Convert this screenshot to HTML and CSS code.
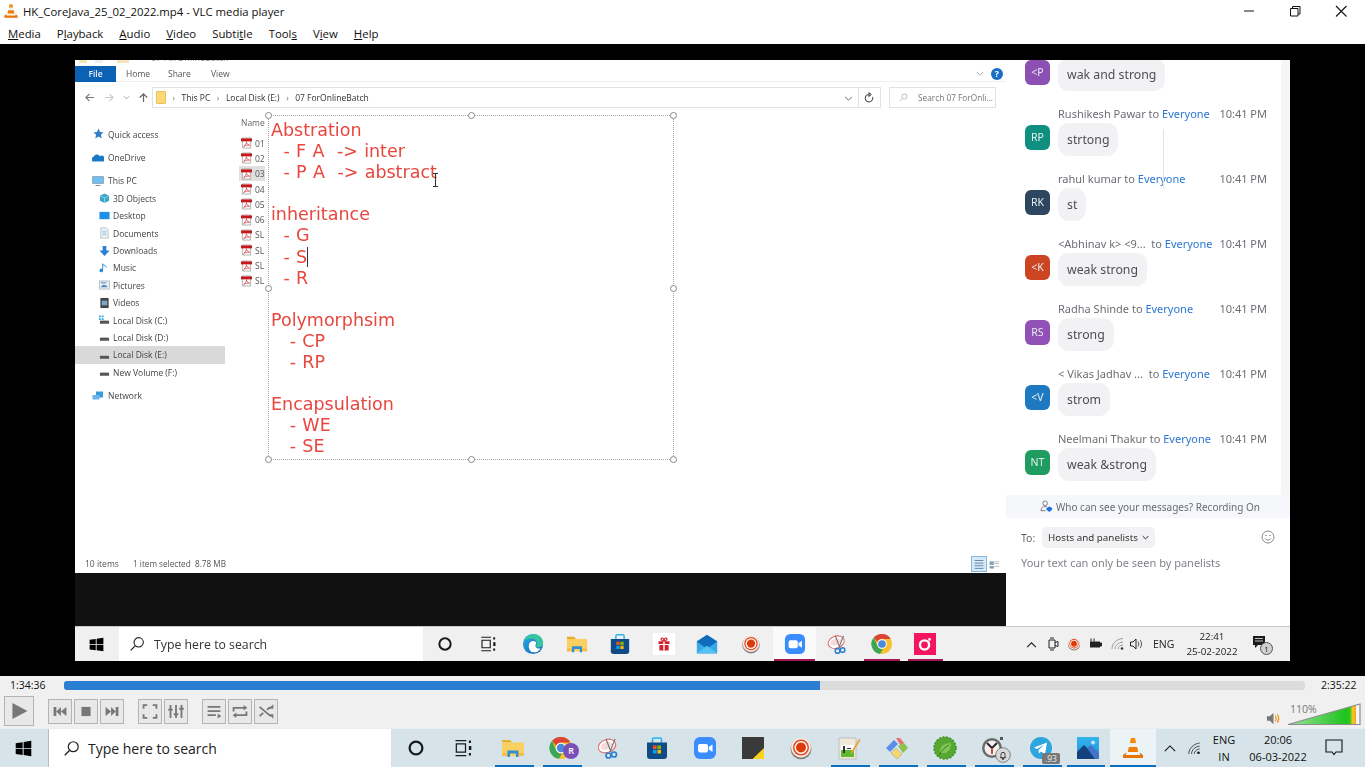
FILE: index.html
```html
<!DOCTYPE html>
<html lang="en">
<head>
<meta charset="utf-8">
<title>VLC media player</title>
<link rel="stylesheet" href="styles.css">
</head>
<body>
<svg class="defs" aria-hidden="true">
  <defs>
    <linearGradient id="volfill" x1="0" x2="1" y1="0" y2="0">
      <stop offset="0" stop-color="#9be39b"/><stop offset=".8" stop-color="#1fc41f"/><stop offset=".86" stop-color="#2cc81c"/><stop offset=".9" stop-color="#ffc81e"/><stop offset=".94" stop-color="#f5a623"/><stop offset=".941" stop-color="#f7f7f7"/><stop offset="1" stop-color="#f7f7f7"/>
    </linearGradient>
    <linearGradient id="edgeblue" x1="0" x2="1" y1="0" y2="1">
      <stop offset="0" stop-color="#2fb0e0"/><stop offset="1" stop-color="#0d5fb8"/>
    </linearGradient>
    <linearGradient id="photosky" x1="0" x2="0" y1="0" y2="1">
      <stop offset="0" stop-color="#35b4ee"/><stop offset="1" stop-color="#1f8fd8"/>
    </linearGradient>
  </defs>
  <symbol id="i-vlc" viewBox="0 0 24 24"><path d="M10 2h4l1.2 5H8.800z" fill="#f48a0c"/><path d="M8.800 7h6.400l1 4H7.800z" fill="#f1f1f1"/><path d="M7.800 11h8.400l1 5H6.800z" fill="#f07d06"/><path d="M6.800 16h10.400l.6 1.800H6.200z" fill="#f4f4f4"/><path d="M5.500 16.500 2 19v3h20v-3l-3.500-2.500.6 2.400H4.900z" fill="#e87405"/></symbol>
  <symbol id="i-win" viewBox="0 0 24 24"><path d="M1 4.500 10.800 3v8.500H1zM12.200 2.800 23 1.200v10.300H12.200zM1 12.800h9.800v8.400L1 19.800zM12.200 12.800H23v10l-10.800-1.500z"/></symbol>
  <symbol id="i-search" viewBox="0 0 24 24"><circle cx="14.500" cy="9.500" r="7" fill="none" stroke="#222" stroke-width="1.700"/><path d="M9.500 14.500 2.500 21.500" stroke="#222" stroke-width="1.900"/></symbol>
  <symbol id="i-cortana" viewBox="0 0 24 24"><circle cx="12" cy="12" r="8.500" fill="none" stroke="#1a1a1a" stroke-width="3"/></symbol>
  <symbol id="i-task" viewBox="0 0 24 24"><path d="M3 3h13M3 21h13M4 7h11v10H4z" fill="none" stroke="#1a1a1a" stroke-width="1.500"/><path d="M19 3h2.500v3H19zM19 9.500h3v5h-3zM19 18h2.500v3H19z" fill="#1a1a1a"/></symbol>
  <symbol id="i-edge" viewBox="0 0 24 24"><circle cx="12" cy="12" r="11" fill="url(#edgeblue)"/><path d="M1.800 9.500C4 2.500 11 0 16 1.500c5 1.600 7.500 6 7 10.500-.4 3.300-5 4.800-8.500 3 2.500-2.500 2-6-.5-7.800C10 5 4.500 6 1.800 9.500z" fill="#38c6a0"/><path d="M7.500 13c.5-3 3-4.700 5.500-4.300 2 .4 3 2 2 4-.7 1.500-.5 3 1.500 3.800 1.500.6 3 .4 4-.2-2 4-5.500 5.200-8.500 4.700-3.500-.6-5-4.500-4.500-8z" fill="#fff"/></symbol>
  <symbol id="i-folder" viewBox="0 0 24 24"><path d="M1 4h8l2 2.500H1z" fill="#e8ad2a"/><path d="M1 6.500h22V20H1z" fill="#fbd063"/><path d="M1 17h5.500v3H1zM17.500 17H23v3h-5.500z" fill="#f2bd4a"/><path d="M6.500 14.500h11V21H15v-3.500H9V21H6.500z" fill="#2f8fd4"/></symbol>
  <symbol id="i-store" viewBox="0 0 24 24"><path d="M7.500 7V3.500a1.500 1.500 0 0 1 1.500-1.500h6a1.500 1.500 0 0 1 1.500 1.500V7" fill="none" stroke="#2bb3e6" stroke-width="1.600"/><path d="M2 6.500h20V20a3 3 0 0 1-3 3H5a3 3 0 0 1-3-3z" fill="#0f4b85"/><path d="M8 9.500h3.600v3.600H8z" fill="#f25022"/><path d="M12.400 9.500H16v3.600h-3.600z" fill="#7fba00"/><path d="M8 13.900h3.600v3.600H8z" fill="#00a4ef"/><path d="M12.400 13.900H16v3.600h-3.600z" fill="#ffb900"/></symbol>
  <symbol id="i-gift" viewBox="0 0 24 24"><path d="M0 0h24v24H0z" fill="#fff"/><path d="M6 9h12v3H6zM7 13h10v6H7z" fill="#d21f2b"/><path d="M11.200 9h1.600v10h-1.600z" fill="#fff"/><path d="M12 9C9 9 8 6 9.500 5.500S12 7 12 9c0-2 1-4 2.500-3.500S15 9 12 9z" fill="none" stroke="#d21f2b" stroke-width="1.200"/></symbol>
  <symbol id="i-mail" viewBox="0 0 24 24"><path d="M1 9 12 2l11 7v13H1z" fill="#0f6cbd"/><path d="M1 9.500 12 17l11-7.500V22H1z" fill="#36a9e6"/><path d="M1 22 12 14l11 8z" fill="#55c2f3"/></symbol>
  <symbol id="i-rec" viewBox="0 0 24 24"><circle cx="12" cy="12.800" r="10.500" fill="#8a7d78"/><circle cx="12" cy="11.500" r="10" fill="#f3e9e4"/><circle cx="12" cy="11.500" r="8" fill="#e8491a"/><circle cx="12" cy="11.500" r="6.500" fill="#fff"/><circle cx="12" cy="11.500" r="5" fill="#dc3b0c"/></symbol>
  <symbol id="i-zoom" viewBox="0 0 24 24"><rect x="1" y="1" width="22" height="22" rx="6" fill="#3a8dff"/><rect x="5" y="8" width="10" height="8.500" rx="2" fill="#fff"/><path d="m15.800 11 3.700-2.600v7.700L15.800 13.500z" fill="#fff"/></symbol>
  <symbol id="i-snip" viewBox="0 0 24 24"><ellipse cx="10" cy="10" rx="9" ry="6.500" transform="rotate(-20 10 10)" fill="#fff" stroke="#e46a6a" stroke-width="1.100"/><ellipse cx="9.500" cy="9.800" rx="6" ry="3.600" transform="rotate(-20 9.500 9.800)" fill="#f6dada"/><path d="m9 3 5 13M18 3l-5 13" stroke="#777" stroke-width="1.200"/><circle cx="11.500" cy="19.500" r="2.500" fill="none" stroke="#2c7fd0" stroke-width="1.700"/><circle cx="17" cy="18.500" r="2.500" fill="none" stroke="#2c7fd0" stroke-width="1.700"/></symbol>
  <symbol id="i-chrome" viewBox="0 0 24 24"><circle cx="12" cy="12" r="11" fill="#fbc02d"/><path d="M12 1a11 11 0 0 1 9.500 5.500H12A5.500 5.500 0 0 0 7 9.800L3 4.800A11 11 0 0 1 12 1z" fill="#db4437"/><path d="M3 4.800 7.300 14.500a5.500 5.500 0 0 0 5.900 3L9.800 22.800A11 11 0 0 1 3 4.800z" fill="#3ca655"/><circle cx="12" cy="12" r="5.300" fill="#fff"/><circle cx="12" cy="12" r="4.200" fill="#4a89dc"/></symbol>
  <symbol id="i-redapp" viewBox="0 0 24 24"><path d="M0 0h24v24H0z" fill="#f5145f"/><circle cx="11.500" cy="13" r="5" fill="none" stroke="#fff" stroke-width="2.600"/><circle cx="17" cy="7" r="1.500" fill="#fff"/></symbol>
  <symbol id="i-sticky" viewBox="0 0 24 24"><path d="M1 1h22v22H1z" fill="#3a3a3a"/><path d="M23 12v11H11.500z" fill="#fbd21e"/></symbol>
  <symbol id="i-note" viewBox="0 0 24 24"><path d="M2 2h17v21H2z" fill="#eee9d8" stroke="#aaa" stroke-width=".6"/><path d="M4 9h13v12H4z" fill="#fff"/><path d="M4 14h13v7H4z" fill="#5fb82e"/><path d="M6 10v7h2v-7zM10 12h4v1h-4z" fill="#333"/><path d="m14 16 8-13 1.500 1-8 13-2 1z" fill="#e8a13a"/></symbol>
  <symbol id="i-gem" viewBox="0 0 24 24"><path d="M1 12 9 4l4 4-8 8z" fill="#5a8fe8"/><path d="M11 2h4l4 5-3 3z" fill="#e87070"/><path d="M13 10l6-3 4 5-5 5z" fill="#8cc152"/><path d="M6 17l5-5 6 6-5 5z" fill="#f5d76e" stroke="#999" stroke-width=".5"/></symbol>
  <symbol id="i-spring" viewBox="0 0 24 24"><circle cx="12" cy="12" r="11" fill="#56a832" stroke="#3f8f22" stroke-width="1.500" stroke-dasharray="2 1.500"/><path d="M7 17c-1-6 4-10 11-10 0 7-4 11-9 10z" fill="#7fc653"/><path d="M6 19C9 14 12 11 16 9" stroke="#2e7a18" fill="none"/></symbol>
  <symbol id="i-clock" viewBox="0 0 24 24"><circle cx="11" cy="12" r="10" fill="#6b6b6b"/><circle cx="11" cy="12" r="7.500" fill="#f1f1f1"/><path d="M11 12 6 7M11 12l5-5" stroke="#222" stroke-width="1.800"/><path d="M11 12v6" stroke="#d23c1c" stroke-width="1.800"/><path d="M19 1h3v3h-3z" fill="#555"/></symbol>
  <symbol id="i-bell" viewBox="0 0 24 24"><circle cx="12" cy="12" r="11" fill="#d9d9d9" stroke="#555"/><path d="M8 16c1-1 1-2 1-5a3 3 0 0 1 6 0c0 3 0 4 1 5zM11 17h2v1.500h-2z" fill="none" stroke="#222" stroke-width="1.300"/></symbol>
  <symbol id="i-telegram" viewBox="0 0 24 24"><circle cx="12" cy="12" r="11" fill="#2ea5dc"/><path d="m5 11.500 13-5-2 12-4-3-2 2-.5-3.500 6-5.500-7.500 4.500z" fill="#fff"/></symbol>
  <symbol id="i-photos" viewBox="0 0 24 24"><path d="M1 1h22v22H1z" fill="url(#photosky)"/><circle cx="17" cy="6.500" r="2" fill="#bfe6fb"/><path d="M1 23V16l7-7 9 9 2 5z" fill="#14407e"/><path d="M11 12l4-3 8 8v6h-4z" fill="#4273c9"/></symbol>
  <symbol id="i-pdf" viewBox="0 0 12 12"><path d="M1.500 .5h9v11h-9z" fill="#fff" stroke="#777" stroke-width=".6"/><path d="M0 1h12v3.200H0z" fill="#c4191c"/><path d="M2.800 10c2-1.500 3.500-4.500 3.200-5.500C5.700 5.800 7 8 9.500 8.400 7.500 8 5 8.500 2.800 10z" fill="none" stroke="#d2232a" stroke-width=".7"/></symbol>
  <symbol id="i-drive" viewBox="0 0 12 12"><path d="M1 7h10v3H1z" fill="#555"/><path d="M2 6h8l1 1H1z" fill="#bbb"/></symbol>
</svg>

<header class="titlebar">
  <svg class="title-icon"><use href="#i-vlc"/></svg>
  <span class="title-text">HK_CoreJava_25_02_2022.mp4 - VLC media player</span>
  <div class="win-btns">
    <svg class="win-btn" viewBox="0 0 46 22"><path d="M18 11h10" stroke="#111"/></svg>
    <svg class="win-btn" viewBox="0 0 46 22"><path d="M18.500 8.500h7.500v7.500h-7.500zM20.500 8.500v-2h7.500v7.500h-2" fill="none" stroke="#111"/></svg>
    <svg class="win-btn" viewBox="0 0 46 22"><path d="m18 6 10.500 10.500M28.500 6 18 16.500" stroke="#111" stroke-width="1.100"/></svg>
  </div>
</header>
<nav class="menubar">
  <span class="menu"><u>M</u>edia</span>
  <span class="menu">P<u>l</u>ayback</span>
  <span class="menu"><u>A</u>udio</span>
  <span class="menu"><u>V</u>ideo</span>
  <span class="menu">Subti<u>t</u>le</span>
  <span class="menu">Tool<u>s</u></span>
  <span class="menu">V<u>i</u>ew</span>
  <span class="menu"><u>H</u>elp</span>
</nav>

<main class="video">
  <div class="screen">
    <div class="screen-main">
      <section class="left">
        <div class="explorer">
          <div class="stub"><span class="stub-icons"></span><span class="stub-text">07 ForOnlineBatch</span></div>
          <div class="tabs">
            <span class="tab-file">File</span>
            <span class="tab tab-home">Home</span>
            <span class="tab tab-share">Share</span>
            <span class="tab tab-view">View</span>
            <span class="tabs-right">
              <svg class="tab-chev" viewBox="0 0 10 6"><path d="m1 1 4 4 4-4" fill="none" stroke="#999"/></svg>
              <span class="help">?</span>
            </span>
          </div>
          <div class="addr-row">
            <span class="nav-icons">
              <svg class="nav-arrow" viewBox="0 0 12 12"><path d="M11 6H2m4-4L2 6l4 4" fill="none" stroke="#777" stroke-width="1.200"/></svg>
              <svg class="nav-arrow" viewBox="0 0 12 12"><path d="M1 6h9M6 2l4 4-4 4" fill="none" stroke="#ccc" stroke-width="1.200"/></svg>
              <svg class="nav-small" viewBox="0 0 8 8"><path d="m1 2.500 3 3 3-3" fill="none" stroke="#999"/></svg>
              <svg class="nav-arrow" viewBox="0 0 12 12"><path d="M6 11V2M2 6l4-4 4 4" fill="none" stroke="#666" stroke-width="1.300"/></svg>
            </span>
            <div class="addr">
              <span class="addr-folder"></span>
              <span class="crumb-sep">›</span><span class="crumb">This PC</span>
              <span class="crumb-sep">›</span><span class="crumb">Local Disk (E:)</span>
              <span class="crumb-sep">›</span><span class="crumb">07 ForOnlineBatch</span>
              <svg class="addr-chev" viewBox="0 0 10 6"><path d="m1 1 4 4 4-4" fill="none" stroke="#666" stroke-width="1.200"/></svg>
              <svg class="addr-refresh" viewBox="0 0 12 12"><path d="M6 2.500a3.700 3.700 0 1 0 3.500 2.500M6 .8v3.400l2-1.700z" fill="none" stroke="#555" stroke-width="1.100"/></svg>
            </div>
            <div class="search-box">
              <svg class="search-glass" viewBox="0 0 24 24"><circle cx="14.500" cy="9.500" r="7" fill="none" stroke="#aaa" stroke-width="2"/><path d="M9.500 14.500 2.500 21.500" stroke="#aaa" stroke-width="2"/></svg>
              <span>Search 07 ForOnli...</span>
            </div>
          </div>
          <div class="ex-body">
            <ul class="tree">
              <li class="node gap"><svg class="n-ic" viewBox="0 0 12 12"><path d="m6.500 .5 1.500 3.500 3.500.4-2.600 2.400.8 3.700-3.200-1.900-3.200 1.900.8-3.700L1.500 4.400 5 4z" fill="#2f7fc9"/></svg>Quick access</li>
              <li class="node gap"><svg class="n-ic" viewBox="0 0 12 12"><path d="M1 9.500a2.300 2.300 0 0 1 .5-4.500 3.500 3.500 0 0 1 6.500-.7 3 3 0 0 1 3.500 5.200z" fill="#1a78c8"/></svg>OneDrive</li>
              <li class="node gap"><svg class="n-ic" viewBox="0 0 12 12"><path d="M.5 1.500h11v7H.5z" fill="#6fc0ee" stroke="#778" stroke-width=".5"/><path d="M3.500 10h5v1h-5z" fill="#889"/></svg>This PC</li>
              <li class="node sub"><svg class="n-ic" viewBox="0 0 12 12"><path d="m6 1 5 2.500v5.500L6 11.500 1 9V3.500z" fill="#3aa7c9"/><path d="m6 6 5-2.500M6 6 1 3.500M6 6v5.500" stroke="#d6f1fa" stroke-width=".6"/></svg>3D Objects</li>
              <li class="node sub"><svg class="n-ic" viewBox="0 0 12 12"><path d="M.5 1.500h11v8H.5z" fill="#1e90e8"/></svg>Desktop</li>
              <li class="node sub"><svg class="n-ic" viewBox="0 0 12 12"><path d="M2 .5h6l2 2v9H2z" fill="#f6f8fa" stroke="#8aa" stroke-width=".7"/><path d="M3.500 4h5M3.500 6h5M3.500 8h5" stroke="#6aa5cf" stroke-width=".7"/></svg>Documents</li>
              <li class="node sub"><svg class="n-ic" viewBox="0 0 12 12"><path d="M4 .5h4v5h3.500L6 11.500.5 5.500H4z" fill="#2a7fd4"/></svg>Downloads</li>
              <li class="node sub"><svg class="n-ic" viewBox="0 0 12 12"><path d="M4.500 1v7.500a2 2 0 1 1-1-1.500V.5c2 2.500 5 2.500 5 6-1-2-2.500-3-4-3.500z" fill="#2b8fe0"/></svg>Music</li>
              <li class="node sub"><svg class="n-ic" viewBox="0 0 12 12"><path d="M.5 1.500h11v9H.5z" fill="#e8eef4" stroke="#8a98a8" stroke-width=".6"/><path d="M2 8l3-2.500 4 1.500v1.500H2zM2 3h6v1H2z" fill="#5b89ba"/></svg>Pictures</li>
              <li class="node sub"><svg class="n-ic" viewBox="0 0 12 12"><path d="M1.500 .5h9v11h-9z" fill="#444"/><path d="M3 3.500h6v5H3z" fill="#7fa6c9"/></svg>Videos</li>
              <li class="node sub"><svg class="n-ic" viewBox="0 0 12 12"><use href="#i-drive"/><path d="M0 1h2v2H0zM3 1h2v2H3zM0 4h2v2H0zM3 4h2v2H3z" fill="#2ea3e0"/></svg>Local Disk (C:)</li>
              <li class="node sub"><svg class="n-ic" viewBox="0 0 12 12"><use href="#i-drive"/></svg>Local Disk (D:)</li>
              <li class="node sub sel"><svg class="n-ic" viewBox="0 0 12 12"><use href="#i-drive"/></svg>Local Disk (E:)</li>
              <li class="node sub"><svg class="n-ic" viewBox="0 0 12 12"><use href="#i-drive"/></svg>New Volume (F:)</li>
              <li class="node gap"><svg class="n-ic" viewBox="0 0 12 12"><path d="M4 1.500h7v6H4z" fill="#3d9ad8"/><path d="M.5 5h7v4.500h-7z" fill="#69b7e8"/></svg>Network</li>
            </ul>
            <div class="files">
              <div class="files-head">Name</div>
              <div class="file"><svg class="pdf"><use href="#i-pdf"/></svg>01</div>
              <div class="file"><svg class="pdf"><use href="#i-pdf"/></svg>02</div>
              <div class="file file-sel"><svg class="pdf"><use href="#i-pdf"/></svg>03</div>
              <div class="file"><svg class="pdf"><use href="#i-pdf"/></svg>04</div>
              <div class="file"><svg class="pdf"><use href="#i-pdf"/></svg>05</div>
              <div class="file"><svg class="pdf"><use href="#i-pdf"/></svg>06</div>
              <div class="file"><svg class="pdf"><use href="#i-pdf"/></svg>SL</div>
              <div class="file"><svg class="pdf"><use href="#i-pdf"/></svg>SL</div>
              <div class="file"><svg class="pdf"><use href="#i-pdf"/></svg>SL</div>
              <div class="file"><svg class="pdf"><use href="#i-pdf"/></svg>SL</div>
            </div>
          </div>
          <div class="ex-status">
            <span class="st-count">10 items</span>
            <span class="st-sel">1 item selected&nbsp; 8.78 MB</span>
            <span class="st-views">
              <svg class="vw vw-on" viewBox="0 0 16 16"><path d="M3 4h10M3 7h10M3 10h10M3 13h10" stroke="#5a7d9a"/></svg>
              <svg class="vw" viewBox="0 0 12 12"><path d="M1 3h4v3H1zM6 3h5M6 5h5M1 8h4v2H1zM6 8h5" fill="#7fa6c9" stroke="#7a8b99" stroke-width=".6"/></svg>
            </span>
          </div>

          <div class="paint-box">
            <pre class="paint-text">Abstration
  - F A  -&gt; inter
  - P A  -&gt; abstract

inheritance
  - G
  - S<span class="caret"></span>
  - R

Polymorphsim
   - CP
   - RP

Encapsulation
   - WE
   - SE</pre>
            <i class="hd hd-tl"></i><i class="hd hd-tc"></i><i class="hd hd-tr"></i>
            <i class="hd hd-ml"></i><i class="hd hd-mr"></i>
            <i class="hd hd-bl"></i><i class="hd hd-bc"></i><i class="hd hd-br"></i>
          </div>
          <svg class="ibeam" viewBox="0 0 7 14"><path d="M1 .5h5M1 13.500h5M3.500 .5v13" fill="none" stroke="#333" stroke-width="1.100"/></svg>
        </div>
        <div class="video-gap"></div>
      </section>

      <aside class="chat">
        <div class="chat-scroll">
          <div class="msgs">
            <article class="msg msg-first">
              <div class="meta"><span>&nbsp;</span></div>
              <div class="row"><span class="av av-purple">&lt;P</span><span class="bubble">wak and strong</span></div>
            </article>
            <article class="msg">
              <div class="meta"><span>Rushikesh Pawar to <b>Everyone</b></span><time>10:41 PM</time></div>
              <div class="row"><span class="av av-teal">RP</span><span class="bubble">strtong</span></div>
            </article>
            <article class="msg">
              <div class="meta"><span>rahul kumar to <b>Everyone</b></span><time>10:41 PM</time></div>
              <div class="row"><span class="av av-navy">RK</span><span class="bubble">st</span></div>
            </article>
            <article class="msg">
              <div class="meta"><span>&lt;Abhinav k&gt; &lt;9...&nbsp; to <b>Everyone</b></span><time>10:41 PM</time></div>
              <div class="row"><span class="av av-red">&lt;K</span><span class="bubble">weak strong</span></div>
            </article>
            <article class="msg">
              <div class="meta"><span>Radha Shinde to <b>Everyone</b></span><time>10:41 PM</time></div>
              <div class="row"><span class="av av-violet">RS</span><span class="bubble">strong</span></div>
            </article>
            <article class="msg">
              <div class="meta"><span>&lt; Vikas Jadhav ...&nbsp; to <b>Everyone</b></span><time>10:41 PM</time></div>
              <div class="row"><span class="av av-blue">&lt;V</span><span class="bubble">strom</span></div>
            </article>
            <article class="msg">
              <div class="meta"><span>Neelmani Thakur to <b>Everyone</b></span><time>10:41 PM</time></div>
              <div class="row"><span class="av av-green">NT</span><span class="bubble">weak &amp;strong</span></div>
            </article>
          </div>
          <i class="cursor-line"></i>
          <i class="thumb"></i>
        </div>
        <div class="notice">
          <svg class="notice-ic" viewBox="0 0 14 14"><circle cx="5.500" cy="3.500" r="2.500" fill="none" stroke="#777"/><path d="M1 11.500c0-3 2-4.500 4.500-4.500 1 0 1.500.2 2 .5M1 11.500h5" fill="none" stroke="#777"/><path d="m10 7 3 1.500v2L10 13l-3-2.500v-2z" fill="#1a6fe0"/></svg>
          <span>Who can see your messages? Recording On</span>
        </div>
        <div class="to-row">
          <span class="to-label">To:</span>
          <span class="chip">Hosts and panelists <svg class="chip-chev" viewBox="0 0 10 6"><path d="m1 1 4 4 4-4" fill="none" stroke="#222" stroke-width="1.400"/></svg></span>
          <svg class="smile" viewBox="0 0 14 14"><circle cx="7" cy="7" r="6" fill="none" stroke="#888"/><circle cx="5" cy="5.500" r=".8" fill="#888"/><circle cx="9" cy="5.500" r=".8" fill="#888"/><path d="M4 8.500c1.500 2 4.500 2 6 0" fill="none" stroke="#888"/></svg>
        </div>
        <div class="placeholder">Your text can only be seen by panelists</div>
      </aside>
    </div>

    <footer class="in-task">
      <svg class="in-start"><use href="#i-win"/></svg>
      <div class="in-search"><svg class="in-glass"><use href="#i-search"/></svg><span>Type here to search</span></div>
      <div class="in-apps">
        <span class="in-app"><svg class="ic-16"><use href="#i-cortana"/></svg></span>
        <span class="in-app"><svg class="ic-18"><use href="#i-task"/></svg></span>
        <span class="in-app in-first"><svg class="ic-22"><use href="#i-edge"/></svg></span>
        <span class="in-app"><svg class="ic-22"><use href="#i-folder"/></svg></span>
        <span class="in-app"><svg class="ic-22"><use href="#i-store"/></svg></span>
        <span class="in-app"><svg class="ic-22"><use href="#i-gift"/></svg></span>
        <span class="in-app"><svg class="ic-22"><use href="#i-mail"/></svg></span>
        <span class="in-app"><svg class="ic-20"><use href="#i-rec"/></svg></span>
        <span class="in-app in-active"><svg class="ic-22"><use href="#i-zoom"/></svg></span>
        <span class="in-app"><svg class="ic-22"><use href="#i-snip"/></svg></span>
        <span class="in-app in-run"><svg class="ic-22"><use href="#i-chrome"/></svg></span>
        <span class="in-app in-run"><svg class="ic-22"><use href="#i-redapp"/></svg></span>
      </div>
      <div class="in-tray">
        <svg class="tr-caret" viewBox="0 0 12 8"><path d="m1 7 5-5 5 5" fill="none" stroke="#222" stroke-width="1.300"/></svg>
        <svg class="tr-ic tr-video" viewBox="0 0 14 14"><path d="M3 3h6v8H3zM9 5.500l3-1v5l-3-1M4 1h4M4 13h4" fill="none" stroke="#222"/></svg>
        <svg class="tr-ic tr-rec"><use href="#i-rec"/></svg>
        <svg class="tr-ic tr-bat" viewBox="0 0 14 14"><path d="M2 4.500h10v6H2z" fill="#222"/><path d="M12 6h1.500v3H12zM3 1.500v3M6 1.500v3" stroke="#222" fill="#222"/></svg>
        <svg class="tr-ic tr-wifi" viewBox="0 0 14 14"><path d="M1 12C1 6 6 2 12 1.500M4 12c0-3.500 3-6.500 8-7M7 12c0-2 1.500-3.500 5-4" fill="none" stroke="#999"/><circle cx="11" cy="11.500" r="1.300" fill="#333"/></svg>
        <svg class="tr-ic tr-vol" viewBox="0 0 14 14"><path d="M1.500 5h2.500l3-3v10l-3-3H1.500z" fill="none" stroke="#222"/><path d="M9 4.500c1 1.500 1 3.500 0 5M11 3c2 2 2 6 0 8" fill="none" stroke="#555"/></svg>
        <span class="tr-lang">ENG</span>
        <span class="tr-clock">22:41<br>25-02-2022</span>
        <span class="tr-notif">
          <svg class="notif-ic" viewBox="0 0 14 14"><path d="M1 1h12v9H6l-3 3v-3H1z" fill="#1a1a1a"/><path d="M3 3.500h8M3 6h8" stroke="#eee" stroke-width=".8"/></svg>
          <i class="notif-badge">1</i>
        </span>
      </div>
    </footer>
  </div>
</main>

<section class="controls">
  <div class="seek-row">
    <span class="time">1:34:36</span>
    <div class="seek"><div class="seek-fill"></div></div>
    <span class="time-end">2:35:22</span>
  </div>
  <div class="btn-row">
    <button class="cb cb-play"><svg viewBox="0 0 30 30"><path d="M8 6.500 24 15 8 23.500z" fill="#777"/></svg></button>
    <div class="btn-group gr-a">
      <button class="cb"><svg viewBox="0 0 24 24"><path d="M5 7h3v10H5zM13 7v10L8 12zM19 7v10l-6-5z" fill="#777"/></svg></button>
      <button class="cb"><svg viewBox="0 0 24 24"><path d="M7 7h10v10H7z" fill="#777"/></svg></button>
      <button class="cb"><svg viewBox="0 0 24 24"><path d="M5 7v10l6-5zM11 7v10l5-5zM16 7h3v10h-3z" fill="#777"/></svg></button>
    </div>
    <div class="btn-group gr-b">
      <button class="cb"><svg viewBox="0 0 24 24"><path d="M5 9V5h4M15 5h4v4M19 15v4h-4M9 19H5v-4" fill="none" stroke="#777" stroke-width="2"/></svg></button>
      <button class="cb"><svg viewBox="0 0 24 24"><path d="M6 5v14M12 5v14M18 5v14" stroke="#777" stroke-width="2"/><path d="M3.500 9h5v2h-5zM9.500 14h5v2h-5zM15.500 8h5v2h-5z" fill="#777"/></svg></button>
    </div>
    <div class="btn-group gr-c">
      <button class="cb"><svg viewBox="0 0 24 24"><path d="M5 7h14M5 11.500h14M5 16h9" stroke="#777" stroke-width="2"/><path d="m16 14.500 4 2.500-4 2.500z" fill="#777"/></svg></button>
      <button class="cb"><svg viewBox="0 0 24 24"><path d="M5 12V8h12M19 12v4H7" fill="none" stroke="#777" stroke-width="2"/><path d="M16 5v6l4-3zM8 13v6l-4-3z" fill="#777"/></svg></button>
      <button class="cb"><svg viewBox="0 0 24 24"><path d="m5 7 12 10M5 17l4-3.500M13 10l4-3" fill="none" stroke="#777" stroke-width="2"/><path d="M20 4v5h-5zM20 20v-5h-5z" fill="#777"/></svg></button>
    </div>
    <div class="volume">
      <svg class="vol-spk" viewBox="0 0 16 16"><path d="M1 5.500h3L8 2v12L4 10.500H1z" fill="#777"/><path d="M10 5c1 2 1 4 0 6M12 3.500c2 3 2 6 0 9" fill="none" stroke="#f08a00" stroke-width="1.200"/></svg>
      <div class="vol-meter">
        <span class="vol-pct">110%</span>
        <svg class="vol-tri" viewBox="0 0 74 23"><path d="M1 21.500 73 1v20.500z" fill="url(#volfill)" stroke="#8d8d8d" stroke-width="1.200"/></svg>
      </div>
    </div>
  </div>
</section>

<footer class="taskbar">
  <svg class="start"><use href="#i-win"/></svg>
  <div class="search"><svg class="glass"><use href="#i-search"/></svg><span>Type here to search</span></div>
  <span class="sys-app"><svg class="ic-18"><use href="#i-cortana"/></svg></span>
  <span class="sys-app"><svg class="ic-20"><use href="#i-task"/></svg></span>
  <div class="apps">
    <span class="app run"><svg class="ic-24"><use href="#i-folder"/></svg></span>
    <span class="app run"><svg class="ic-24"><use href="#i-chrome"/></svg><i class="badge-r">R</i></span>
    <span class="app"><svg class="ic-24"><use href="#i-snip"/></svg></span>
    <span class="app"><svg class="ic-24"><use href="#i-store"/></svg></span>
    <span class="app"><svg class="ic-24"><use href="#i-zoom"/></svg></span>
    <span class="app"><svg class="ic-24"><use href="#i-sticky"/></svg></span>
    <span class="app"><svg class="ic-24"><use href="#i-rec"/></svg></span>
    <span class="app run"><svg class="ic-24"><use href="#i-note"/></svg></span>
    <span class="app run"><svg class="ic-24"><use href="#i-gem"/></svg></span>
    <span class="app run"><svg class="ic-24"><use href="#i-spring"/></svg></span>
    <span class="app run"><svg class="ic-24"><use href="#i-clock"/></svg><svg class="badge-bell"><use href="#i-bell"/></svg></span>
    <span class="app run"><svg class="ic-24"><use href="#i-telegram"/></svg><i class="badge-93">.93</i></span>
    <span class="app run app-photos"><svg class="ic-24"><use href="#i-photos"/></svg></span>
    <span class="app run active"><svg class="ic-24"><use href="#i-vlc"/></svg></span>
  </div>
  <div class="tray">
    <svg class="t-caret" viewBox="0 0 14 8"><path d="m1 7 6-6 6 6" fill="none" stroke="#111" stroke-width="1.300"/></svg>
    <svg class="t-wifi" viewBox="0 0 18 16"><path d="M1 15C1 8 7 2 15 1M4.500 15c0-5 4.500-9.500 10.500-10M8 15c0-3 3-6 7-6.500" fill="none" stroke="#222"/><circle cx="13.500" cy="13.500" r="1.700" fill="#111"/></svg>
    <span class="t-lang">ENG<br>IN</span>
    <span class="t-clock">20:06<br>06-03-2022</span>
    <svg class="t-notif" viewBox="0 0 18 18"><path d="M1 2h16v12h-6l-2 2.500L7 14H1z" fill="none" stroke="#111" stroke-width="1.100"/></svg>
  </div>
</footer>
</body>
</html>
```
FILE: styles.css
```css
* { box-sizing: border-box; }
html, body { margin: 0; padding: 0; }
body {
  width: 1365px;
  height: 767px;
  overflow: hidden;
  display: flex;
  flex-direction: column;
  font-family: "Open Sans", "Noto Sans", sans-serif;
  color: #111;
  background: #fff;
}
.defs { position: absolute; width: 0; height: 0; }
i { font-style: normal; }

/* VLC window chrome */
.titlebar { height: 22px; display: flex; align-items: center; background: #fff; }
.title-icon { width: 16px; height: 18px; flex: none; margin-left: 3px; }
.title-text { margin-left: 4px; font-size: 11.350px; white-space: nowrap; color: #111; }
.win-btns { margin-left: auto; display: flex; margin-right: 1px; }
.win-btn { width: 46px; height: 22px; display: block; }
.menubar { height: 22px; display: flex; background: #fff; font-size: 11.400px; align-items: center; padding-left: 8px; }
.menu { margin-right: 16px; white-space: nowrap; color: #111; }

.video { height: 632px; background: #000; padding: 16px 75px 15px; }
.screen { height: 601px; display: flex; flex-direction: column; }
.screen-main { flex: 1; display: flex; min-height: 0; }
.left { width: 931px; display: flex; flex-direction: column; }
.video-gap { flex: 1; background: #111; }

/* Explorer inside the video */
.explorer {
  position: relative;
  height: 513px;
  background: #fff;
  display: flex;
  flex-direction: column;
  font-size: 8.500px;
  color: #444;
  overflow: hidden;
  filter: blur(.3px);
}
.stub { height: 6px; display: flex; overflow: hidden; flex: none; }
.stub-icons { width: 50px; height: 3px; margin-left: 4px; background: linear-gradient(90deg, #f5e6b8 0 8px, #fff 8px 16px, #eee 16px 24px, #fff 24px 38px, #f5e6b8 38px); }
.stub-text { margin: -9px 0 0 22px; font-size: 9px; color: #888; }
.tabs { height: 16px; flex: none; display: flex; align-items: center; position: relative; border-bottom: 1px solid #efefef; }
.tab-file { width: 41px; height: 16px; background: #0b62b5; color: #eef; display: flex; align-items: center; justify-content: center; font-weight: 600; }
.tab { position: absolute; top: 2px; color: #555; }
.tab-home { left: 51px; }
.tab-share { left: 93px; }
.tab-view { left: 136px; }
.tabs-right { margin-left: auto; display: flex; align-items: center; padding-right: 3px; }
.tab-chev { width: 8px; height: 5px; margin-right: 7px; }
.help { width: 12px; height: 12px; border-radius: 50%; background: #1a6fc4; color: #fff; font-weight: 700; font-size: 9px; line-height: 12px; text-align: center; }
.addr-row { flex: none; height: 21px; margin-top: 5px; display: flex; align-items: center; }
.nav-icons { width: 77px; padding-left: 9px; display: flex; align-items: center; gap: 9px; }
.nav-arrow { width: 11px; height: 11px; flex: none; }
.nav-small { width: 7px; height: 7px; flex: none; margin-left: -1px; margin-right: -1px; }
.addr { width: 729px; height: 21px; border: 1px solid #e2e2e2; display: flex; align-items: center; position: relative; padding-left: 3px; color: #333; }
.addr-folder { width: 10px; height: 13px; background: #fbd978; border: 1px solid #e9c25e; border-radius: 1px; }
.crumb-sep { margin: 0 6.500px; color: #777; }
.addr-chev { position: absolute; left: 691px; top: 8px; width: 9px; height: 5px; }
.addr-refresh { position: absolute; left: 710px; top: 4px; width: 12px; height: 12px; }
.addr::after { content: ""; position: absolute; left: 705px; top: 0; bottom: 0; width: 1px; background: #e2e2e2; }
.search-box { width: 107px; height: 21px; margin-left: 8px; border: 1px solid #e2e2e2; display: flex; align-items: center; padding-left: 9px; gap: 10px; color: #777; white-space: nowrap; font-size: 8.300px; }
.search-glass { width: 9px; height: 9px; flex: none; }

.ex-body { flex: 1; display: flex; min-height: 0; }
.tree { width: 150px; margin: 0; padding: 17.500px 0 0; list-style: none; flex: none; }
.node { height: 17.400px; display: flex; align-items: center; padding-left: 17px; white-space: nowrap; }
.gap { margin-bottom: 6px; }
.gap:nth-child(3) { margin-bottom: 0; }
.sub { padding-left: 24px; }
.sub:nth-child(14) { margin-bottom: 6px; }
.sel { background: #d9d9d9; }
.n-ic { width: 12px; height: 12px; margin-right: 4px; flex: none; }
.sub .n-ic { width: 11px; margin-right: 3px; }
.files { padding: 8px 0 0 14px; }
.files-head { height: 14.500px; line-height: 14px; padding-left: 2px; color: #666; margin-bottom: 5px; }
.file { width: 26px; height: 15.300px; display: flex; align-items: center; padding-left: 2px; gap: 3px; color: #555; overflow: hidden; }
.file-sel { background: #e0e0e0; }
.pdf { width: 11px; height: 12px; flex: none; }
.ex-status { flex: none; height: 18px; display: flex; align-items: center; padding: 0 0 2px 10px; color: #555; position: relative; }
.st-count { width: 48px; }
.st-sel { font-size: 8.200px; }
.st-views { position: absolute; left: 896px; top: 1px; display: flex; gap: 2px; align-items: center; }
.vw { width: 11px; height: 11px; }
.vw-on { width: 16px; height: 16px; background: #d6e9f8; border: 1px solid #8ab8dc; }

/* Paint selection box over the explorer */
.paint-box { position: absolute; left: 193px; top: 55px; width: 406px; height: 345px; border: 1px dotted #a5a5a5; }
.paint-text { margin: 4px 0 0 2px; font-family: "DejaVu Sans", sans-serif; font-size: 17.500px; word-spacing: .7px; line-height: 21.100px; color: #e8463e; white-space: pre; }
.caret { display: inline-block; width: 1px; height: 20px; background: #333; vertical-align: -4px; }
.hd { position: absolute; width: 7px; height: 7px; background: #fff; border: 1px solid #888; border-radius: 50%; }
.hd-tl { left: -4px; top: -4px; }
.hd-tc { left: 199px; top: -4px; }
.hd-tr { right: -4px; top: -4px; }
.hd-ml { left: -4px; top: 169px; }
.hd-mr { right: -4px; top: 169px; }
.hd-bl { left: -4px; bottom: -4px; }
.hd-bc { left: 199px; bottom: -4px; }
.hd-br { right: -4px; bottom: -4px; }
.ibeam { position: absolute; left: 357px; top: 113px; width: 7px; height: 14px; }

/* Zoom chat panel */
.chat { width: 284px; background: #fff; display: flex; flex-direction: column; font-family: "Noto Sans", sans-serif; filter: blur(.25px); }
.chat-scroll { height: 435px; overflow: hidden; position: relative; border-right: 9px solid #f6f6f8; }
.msgs { margin-top: -18px; }
.msg { height: 65px; padding: 0 14px 0 19px; }
.meta { height: 16px; margin-left: 33px; display: flex; justify-content: space-between; font-size: 11px; line-height: 14px; color: #6d6d75; white-space: nowrap; }
.meta b { font-weight: 400; color: #2a77d4; }
.meta time { color: #6d6d75; }
.row { display: flex; align-items: flex-start; gap: 8px; }
.av { width: 25px; height: 25px; margin-top: 2px; padding-bottom: 2px; border-radius: 6px; color: #e8eef2; font-size: 10.500px; display: flex; align-items: center; justify-content: center; flex: none; }
.av-purple { background: #8c4fb2; }
.av-teal { background: #0f8f80; }
.av-navy { background: #2c475f; }
.av-red { background: #cd4422; }
.av-violet { background: #9251b6; }
.av-blue { background: #1d7ac2; }
.av-green { background: #1f9c5f; }
.bubble { height: 33px; padding: 0 9px; background: #f2f2f5; border-radius: 11px; font-size: 12.300px; line-height: 33px; color: #4d4d55; white-space: nowrap; }
.cursor-line { position: absolute; left: 157px; top: 69px; width: 1px; height: 60px; background: #e3e3e6; }
.thumb { position: absolute; left: 275px; top: 426px; width: 7px; height: 7px; border-radius: 50%; background: #aaa; }
.notice { height: 23px; display: flex; align-items: center; justify-content: center; gap: 3px; background: #f6f7fb; font-size: 10px; color: #6a6a72; padding-left: 4px; }
.notice-ic { width: 13px; height: 13px; flex: none; }
.to-row { height: 21px; margin-top: 9px; display: flex; align-items: center; padding-left: 15px; font-size: 10.500px; position: relative; }
.to-label { width: 21px; color: #666; }
.chip { height: 21px; width: 113px; background: #f2f2f5; border-radius: 5px; display: flex; align-items: center; justify-content: center; gap: 4px; color: #333; white-space: nowrap; font-size: 9.800px; }
.chip-chev { width: 7px; height: 5px; }
.smile { position: absolute; right: 15px; top: 3px; width: 14px; height: 14px; }
.placeholder { margin: 7px 0 0 15px; font-size: 11px; line-height: 15px; color: #82828a; white-space: nowrap; }

/* Taskbar captured in the video */
.in-task { height: 35px; flex: none; display: flex; align-items: center; background: #f0f0f0; border-top: 1px solid #c8c8c8; position: relative; filter: blur(.25px); }
.in-start { width: 15px; height: 15px; margin-left: 14px; flex: none; }
.in-search { width: 304px; height: 34px; margin-left: 15px; background: #fff; display: flex; align-items: center; padding-left: 10px; gap: 9px; font-size: 12.300px; color: #333; flex: none; }
.in-glass { width: 16px; height: 16px; flex: none; }
.in-apps { display: flex; height: 34px; }
.in-app { width: 43.600px; height: 34px; display: flex; align-items: center; justify-content: center; position: relative; }
.in-first { margin-left: 1px; }
.in-active { background: #fafafa; }
.in-active::after, .in-run::after { content: ""; position: absolute; left: 1px; right: 1px; bottom: 0; height: 2px; background: #a21850; }
.in-run::after { left: 4px; right: 4px; }
.ic-16 { width: 16px; height: 16px; }
.ic-18 { width: 18px; height: 18px; }
.ic-20 { width: 20px; height: 20px; }
.ic-22 { width: 22px; height: 22px; }
.ic-24 { width: 24px; height: 24px; }
.in-tray { margin-left: auto; display: flex; align-items: center; height: 34px; position: relative; width: 275px; font-size: 10.500px; color: #222; flex: none; }
.tr-caret { width: 11px; height: 7px; margin-left: 11px; flex: none; }
.tr-ic { width: 14px; height: 14px; flex: none; }
.tr-video { margin-left: 9px; }
.tr-rec { margin-left: 7px; }
.tr-bat { margin-left: 7px; }
.tr-wifi { margin-left: 9px; }
.tr-vol { margin-left: 4px; }
.tr-lang { margin-left: 10px; }
.tr-clock { margin-left: 12px; text-align: center; line-height: 15px; font-size: 9.800px; }
.tr-notif { position: absolute; left: 237px; top: 8px; width: 20px; height: 20px; }
.notif-ic { width: 14px; height: 14px; display: block; }
.notif-badge { position: absolute; left: 8px; top: 7px; width: 13px; height: 13px; border-radius: 50%; background: #cfcfcf; border: 1px solid #555; font-size: 8px; line-height: 11px; text-align: center; color: #222; }

/* VLC controls */
.controls { height: 52px; background: #f0f0f0; display: flex; flex-direction: column; }
.seek-row { height: 18px; display: flex; align-items: center; padding-left: 10px; font-size: 10.500px; color: #111; flex: none; }
.time { width: 54px; white-space: nowrap; flex: none; }
.time-end { white-space: nowrap; flex: none; }
.seek { width: 1241px; height: 9px; margin-right: 16px; background: #dcdcdc; border-radius: 3px; flex: none; }
.seek-fill { width: 756px; height: 9px; background: #2a7fd2; border-radius: 3px 0 0 3px; }
.btn-row { height: 34px; display: flex; align-items: center; padding-left: 4px; flex: none; }
.cb { width: 24px; height: 25px; padding: 0; border: 1px solid #b4b4b4; background: #e8e8e8; display: block; flex: none; }
.cb svg { width: 100%; height: 100%; display: block; }
.cb-play { width: 30px; height: 30px; }
.btn-group { display: flex; gap: 2px; margin-left: 14px; }
.volume { margin-left: auto; display: flex; align-items: flex-end; padding-right: 4px; height: 30px; }
.vol-spk { width: 15px; height: 15px; margin-right: 6px; }
.vol-meter { width: 74px; position: relative; height: 24px; }
.vol-pct { position: absolute; left: 3px; top: 0; font-size: 10.500px; color: #777; }
.vol-tri { width: 74px; height: 23px; display: block; position: absolute; top: 1px; left: 0; }

/* Host taskbar */
.taskbar { height: 39px; flex: none; display: flex; align-items: center; background: #d6e4ea; border-top: 1px solid #e8eef0; }
.start { width: 17px; height: 17px; margin-left: 15px; flex: none; }
.search { width: 343px; height: 38px; margin-left: 16px; background: #fff; display: flex; align-items: center; padding-left: 14px; gap: 8px; font-size: 14px; color: #222; flex: none; border-left: 1px solid #bbb; }
.glass { width: 17px; height: 17px; flex: none; }
.sys-app { width: 47px; height: 38px; display: flex; align-items: center; justify-content: center; flex: none; }
.sys-app:nth-of-type(1) { margin-left: 1px; }
.apps { display: flex; margin-left: 3px; flex: none; }
.app { width: 48px; height: 38px; display: flex; align-items: center; justify-content: center; position: relative; flex: none; }
.app-photos { width: 45px; }
.run::after { content: ""; position: absolute; left: 6px; right: 3px; bottom: 0; height: 2px; background: #0b6fc0; }
.app-photos::after { left: 2px; right: 5px; }
.active { width: 46px; background: #ecf3f6; }
.active::after { left: 0; right: 0; }
.badge-r { position: absolute; left: 26px; top: 14px; width: 16px; height: 16px; background: #7a4fb8; border-radius: 50%; color: #fff; font-size: 9px; font-weight: 600; line-height: 16px; text-align: center; }
.badge-bell { position: absolute; left: 26px; top: 18px; width: 16px; height: 16px; }
.badge-93 { position: absolute; left: 25px; top: 24px; padding: 0 3px; height: 11px; background: #777; border-radius: 2px; color: #eee; font-size: 8.500px; line-height: 11px; }
.tray { flex: 1; height: 38px; position: relative; display: flex; align-items: center; color: #111; }
.t-caret { width: 12px; height: 7px; margin-left: 8px; flex: none; }
.t-wifi { width: 14px; height: 13px; margin-left: 12px; flex: none; }
.t-lang { width: 40px; margin-left: 2px; text-align: center; font-size: 11px; line-height: 17px; flex: none; }
.t-clock { margin-left: 1px; width: 66px; text-align: center; font-size: 11px; line-height: 17px; white-space: nowrap; flex: none; }
.t-notif { position: absolute; right: 22px; top: 9px; width: 18px; height: 18px; }
```
